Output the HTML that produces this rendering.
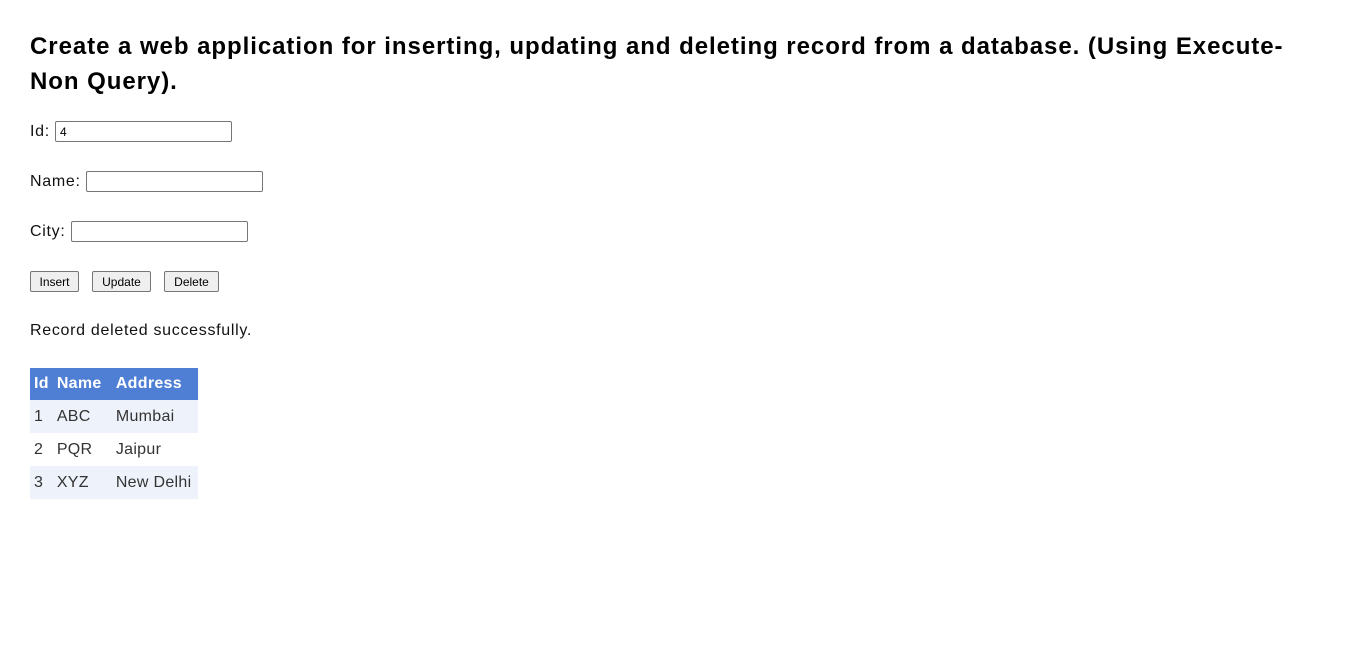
<!DOCTYPE html>
<html><head><meta charset="utf-8"><style>
body{margin:0;font-family:"Liberation Sans",sans-serif;color:#000;background:#fff}
h2{position:absolute;left:30px;top:29px;margin:0;font-size:24px;line-height:35px;font-weight:bold;white-space:nowrap;letter-spacing:0.95px}
.l{position:absolute;left:30px;font-size:16px;color:#111;letter-spacing:0.7px;line-height:21px}
input{font-family:"Liberation Sans",sans-serif;font-size:12px;height:21px;box-sizing:border-box;border:1px solid #767676;border-radius:2px;padding:1px 4px;vertical-align:top;margin:0;letter-spacing:0}
button{position:absolute;top:271px;height:21px;font-family:"Liberation Sans",sans-serif;font-size:12px;border:1px solid #767676;border-radius:2px;background:#efefef;padding:0 6px}
table{position:absolute;left:30px;top:368px;border-collapse:collapse;font-size:16px;color:#333;letter-spacing:0.3px;white-space:nowrap}
th{background:#4f7fd4;color:#fff;font-weight:bold;height:32px;line-height:32px;text-align:left;padding:0 4px;box-sizing:border-box}
td{height:33px;line-height:32px;padding:1px 4px 0;box-sizing:border-box}
tr.o td{background:#eef3fb}
</style></head><body>
<h2>Create a web application for inserting, updating and deleting record from a database. (Using Execute-<br>Non Query).</h2>
<div class="l" style="top:121px">Id: <input value="4" style="width:177px"></div>
<div class="l" style="top:171px">Name: <input style="width:177px"></div>
<div class="l" style="top:221px">City: <input style="width:177px"></div>
<button style="left:30px;width:49px">Insert</button>
<button style="left:92px;width:59px">Update</button>
<button style="left:164px;width:55px">Delete</button>
<div class="l" style="top:320px">Record deleted successfully.</div>
<table>
<tr><th style="width:22px">Id</th><th style="width:59px">Name</th><th style="width:86px">Address</th></tr>
<tr class="o"><td>1</td><td>ABC</td><td>Mumbai</td></tr>
<tr><td>2</td><td>PQR</td><td>Jaipur</td></tr>
<tr class="o"><td>3</td><td>XYZ</td><td>New Delhi</td></tr>
</table>
</body></html>
